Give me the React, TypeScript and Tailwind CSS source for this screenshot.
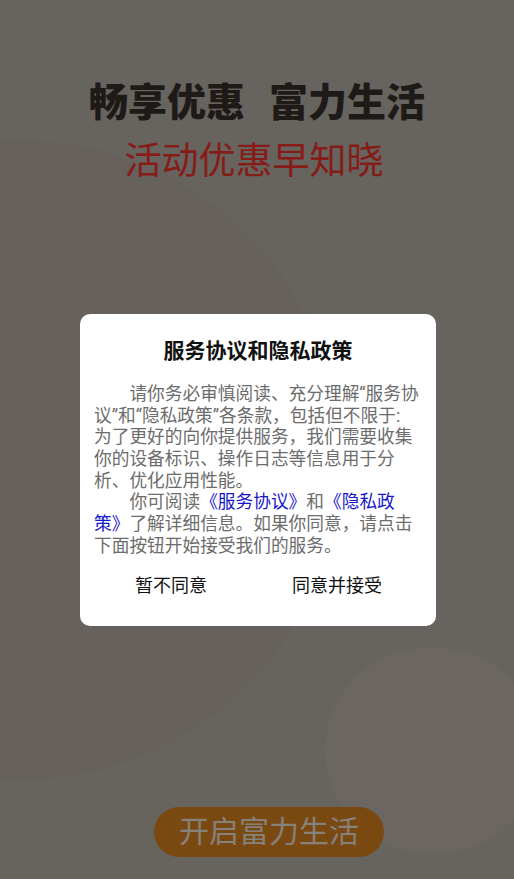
import React from 'react';

const bodyLines: { indent?: boolean; parts: { text: string; link?: boolean }[] }[] = [
  { indent: true, parts: [{ text: '请你务必审慎阅读、充分理解“服务协' }] },
  { parts: [{ text: '议”和“隐私政策”各条款，包括但不限于:' }] },
  { parts: [{ text: '为了更好的向你提供服务，我们需要收集' }] },
  { parts: [{ text: '你的设备标识、操作日志等信息用于分' }] },
  { parts: [{ text: '析、优化应用性能。' }] },
  {
    indent: true,
    parts: [
      { text: '你可阅读' },
      { text: '《服务协议》', link: true },
      { text: '和' },
      { text: '《隐私政', link: true },
    ],
  },
  {
    parts: [
      { text: '策》', link: true },
      { text: '了解详细信息。如果你同意，请点击' },
    ],
  },
  { parts: [{ text: '下面按钮开始接受我们的服务。' }] },
];

export default function App() {
  return (
    <div
      className="relative w-full h-[879px] overflow-hidden bg-[#67635f] flex flex-col"
      style={{ fontFamily: 'Roboto, "Noto Sans CJK SC", sans-serif' }}
    >
      {/* Background shapes under the dim */}
      <div className="absolute -left-[300px] top-[140px] w-[640px] h-[640px] rounded-full bg-[#66615d] pointer-events-none"></div>
      <div className="absolute left-[325px] top-[648px] w-[215px] h-[205px] rounded-full bg-[#6b6661] pointer-events-none"></div>

      {/* Headline */}
      <div className="relative flex flex-col items-center">
        <div className="mt-[80px] flex gap-[24px] text-[39px] leading-[47px] font-black text-[#1e1a17]">
          <span>畅享优惠</span>
          <span>富力生活</span>
        </div>
        <div className="mt-[13px] text-[37px] leading-[44px] text-[#861c17] -ml-[6px]">活动优惠早知晓</div>
      </div>

      {/* Bottom button */}
      <div className="relative mt-auto mb-[22px] ml-[154px] w-[230px] h-[50px] rounded-full bg-[#7a4912] flex items-center justify-center">
        <span className="text-[30px] leading-none text-[#86817b]">开启富力生活</span>
      </div>

      {/* Dialog */}
      <div className="absolute left-[80px] top-[314px] w-[356px] h-[312px] rounded-[10px] bg-white flex flex-col">
        <div className="pt-[23px] text-center text-[21px] leading-[28px] font-bold text-[#111]">服务协议和隐私政策</div>
        <div className="mt-[19px] px-[14px] text-[17.7px] leading-[21.67px] text-[#6c6c6c]">
          {bodyLines.map((line, i) => (
            <div key={i} className={`whitespace-nowrap ${line.indent ? 'pl-[35.4px]' : ''}`}>
              {line.parts.map((p, j) => (
                <span key={j} className={p.link ? 'text-[#1717cc]' : ''}>
                  {p.text}
                </span>
              ))}
            </div>
          ))}
        </div>
        <div className="mt-[17px] flex text-[18px] leading-[24px] text-[#111]">
          <button className="ml-[10px] w-[162px] text-center">暂不同意</button>
          <button className="ml-[4px] w-[162px] text-center">同意并接受</button>
        </div>
      </div>
    </div>
  );
}
